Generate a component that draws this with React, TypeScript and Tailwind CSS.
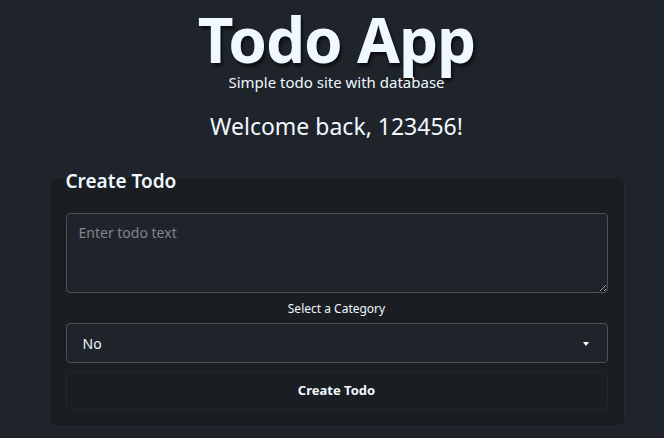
import React from 'react';

export default function App() {
  return (
    <div
      className="min-h-[438px] w-full bg-[#1f232a] pl-[9px] text-[#f0f8ff] flex flex-col items-center"
      style={{ fontFamily: '"Noto Sans", "Open Sans", sans-serif' }}
    >
      {/* Header */}
      <h1 className="mt-[6px] text-[62px] font-bold leading-[66px] tracking-[-1px] [text-shadow:2px_3px_3px_rgba(0,0,0,0.6)]">
        Todo App
      </h1>
      <p className="text-[15px] leading-[20px]">Simple todo site with database</p>
      <h2 className="mt-[19px] text-[23px] leading-[30px]">Welcome back, 123456!</h2>

      {/* Create form */}
      <fieldset className="mt-[24px] w-[576px] rounded-lg border border-[#262a30] bg-[#1a1d22] px-[16px] pb-[16px] pt-0">
        <legend className="relative top-[4px] px-0 text-[19px] font-semibold leading-[24px]">Create Todo</legend>
        <textarea
          placeholder="Enter todo text"
          className="mt-[24px] block h-[80px] w-full resize-y rounded-[4px] border border-[#4b5057] bg-[#1f232a] px-[12px] py-[8px] text-[14px] text-[#f0f8ff] placeholder:text-[#80868d] outline-none"
        />
        <p className="mt-[8px] text-center text-[12px] leading-[16px]">Select a Category</p>
        <div className="relative mt-[6px]">
          <select className="block h-[40px] w-full appearance-none rounded-[4px] border border-[#4b5057] bg-[#1f232a] px-[16px] text-[14px] text-[#f0f8ff] outline-none">
            <option>No</option>
          </select>
          <span className="pointer-events-none absolute right-[19px] top-[19px] h-0 w-0 border-x-[3px] border-t-[4px] border-x-transparent border-t-white" />
        </div>
        <button className="mt-[8px] block h-[39px] w-full rounded-[4px] border border-[#23262c] bg-[#1a1d22] text-[13px] font-bold text-[#f0f8ff]">
          Create Todo
        </button>
      </fieldset>
    </div>
  );
}
